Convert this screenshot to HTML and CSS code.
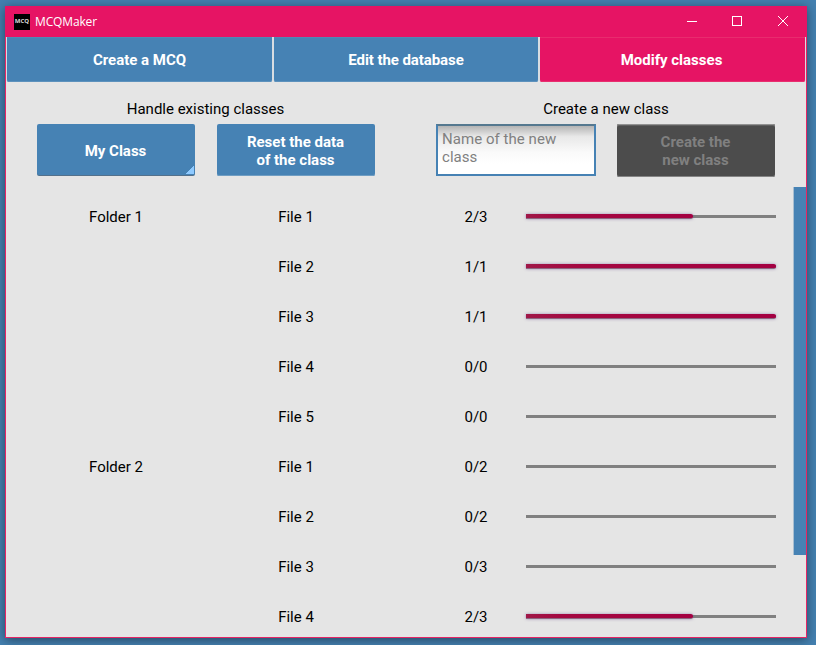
FILE: index.html
```html
<!DOCTYPE html>
<html lang="en">
<head>
<meta charset="utf-8">
<title>MCQMaker</title>
<link rel="stylesheet" href="styles.css">
</head>
<body>
<main class="window">
  <header class="titlebar">
    <span class="logo">MCQ</span>
    <span class="title">MCQMaker</span>
    <svg class="controls" width="104" height="12" viewBox="0 0 104 12" fill="none" stroke="#fff">
      <path d="M1 6.500h10"/>
      <rect x="46.500" y="1.500" width="9" height="9"/>
      <path d="M92 1l10 10M102 1L92 11"/>
    </svg>
  </header>
  <nav class="tabs">
    <button class="tab">Create a MCQ</button>
    <button class="tab edit">Edit the database</button>
    <button class="tab active">Modify classes</button>
  </nav>
  <section class="forms">
    <div class="group existing">
      <h2>Handle existing classes</h2>
      <div class="fields">
        <button class="btn select">My Class</button>
        <button class="btn">Reset the data<br>of the class</button>
      </div>
    </div>
    <div class="group">
      <h2>Create a new class</h2>
      <div class="fields">
        <div class="input">Name of the new class</div>
        <button class="btn disabled">Create the<br>new class</button>
      </div>
    </div>
  </section>
  <section class="scroll">
    <div class="rows">
      <div class="row"><span>Folder 1</span><span>File 1</span><span class="count">2/3</span><div class="bar"><div class="fill" style="width:66.667%"></div></div></div>
      <div class="row"><span></span><span>File 2</span><span class="count">1/1</span><div class="bar"><div class="fill" style="width:100%"></div></div></div>
      <div class="row"><span></span><span>File 3</span><span class="count">1/1</span><div class="bar"><div class="fill" style="width:100%"></div></div></div>
      <div class="row"><span></span><span>File 4</span><span class="count">0/0</span><div class="bar"></div></div>
      <div class="row"><span></span><span>File 5</span><span class="count">0/0</span><div class="bar"></div></div>
      <div class="row"><span>Folder 2</span><span>File 1</span><span class="count">0/2</span><div class="bar"></div></div>
      <div class="row"><span></span><span>File 2</span><span class="count">0/2</span><div class="bar"></div></div>
      <div class="row"><span></span><span>File 3</span><span class="count">0/3</span><div class="bar"></div></div>
      <div class="row"><span></span><span>File 4</span><span class="count">2/3</span><div class="bar"><div class="fill" style="width:66.667%"></div></div></div>
    </div>
    <div class="thumb"></div>
  </section>
</main>
</body>
</html>
```
FILE: styles.css
```css
* { box-sizing: border-box; }
body {
  margin: 0;
  padding: 6px 9px 7px 5px;
  height: 645px;
  overflow: hidden;
  background: #4480b0;
  font: 15px/18px Roboto, sans-serif;
  color: #000;
}
.window {
  height: 632px;
  width: 802px;
  border: 1px solid #e62565;
  border-top: 0;
  background: #e5e5e5;
  box-shadow: 0 2px 10px rgba(0, 0, 0, .45);
  display: flex;
  flex-direction: column;
}
.titlebar {
  height: 31px;
  flex: none;
  margin: 0 -1px;
  padding: 0 17px 0 9px;
  display: flex;
  align-items: center;
  background: #e61464;
  color: #fff;
}
.logo {
  width: 16px;
  height: 16px;
  background: #000;
  color: #ddd;
  font: bold 6px/15px "Open Sans", sans-serif;
  text-align: center;
}
.title {
  margin-left: 5px;
  font: 12px/16px "Open Sans", sans-serif;
  letter-spacing: -.15px;
}
.controls {
  margin: 0 0 2px auto;
}
.tabs {
  display: grid;
  grid-template-columns: 265px 264px 265px;
  height: 45px;
  flex: none;
  justify-content: space-between;
  padding: 0 1px;
  background: linear-gradient(#d8dde2 44px, #e5e5e5 44px);
}
button {
  border: 0;
  margin: 0;
  padding: 0;
  font: bold 15px/18px Roboto, sans-serif;
  color: #fff;
}
.tab {
  background: #4682b4;
  border-radius: 0 0 2px 2px;
  box-shadow: inset 0 -1px #5e92bd, inset 0 1px #5088b6;
}
.tab.edit { letter-spacing: -.08px; }
.tab.active {
  background: #e61464;
  box-shadow: inset 0 -1px #e8306f, inset 0 1px #e82c6e;
  padding-right: 2px;
}
.forms {
  display: flex;
  height: 105px;
  flex: none;
  padding: 18px 30px 0;
  justify-content: space-between;
}
.group { width: 340px; }
h2 {
  margin: 0 0 6px;
  font: 15px/18px Roboto, sans-serif;
  text-align: center;
}
.existing h2 { padding-right: 1px; }
.fields {
  display: flex;
  justify-content: space-between;
  padding: 0 1px 0 0;
}
.existing .fields { padding-left: 1px; }
.btn {
  width: 158px;
  height: 52px;
  padding: 2px 1px 0 0;
  background: #4682b4;
  border-radius: 2px;
  box-shadow: inset 0 -1px #6f9dc2;
}
.select {
  background: linear-gradient(135deg, transparent 50%, #8fcaff 50%) right 1px bottom 2px / 9px 8px no-repeat #4682b4;
  box-shadow: inset 0 -1px #54718b;
}
.disabled {
  height: 53px;
  padding: 1px 1px 0 0;
  background: #4c4c4c;
  color: #808080;
  box-shadow: inset 0 1px #929292, inset 0 2px #606060, inset 0 -1px #858585;
}
.input {
  width: 160px;
  height: 52px;
  border: 2px solid #4682b4;
  border-top-color: #55788f;
  background: linear-gradient(#b4b4b4, #e8e8e8 22%, #fafafa 55%, #fff 80%);
  color: #808080;
  padding: 4px;
  letter-spacing: .05px;
}
.scroll {
  flex: 1;
  min-height: 0;
  display: flex;
  justify-content: space-between;
}
.rows {
  padding: 5px 0 0 20px;
  width: 786px;
  overflow: hidden;
}
.row {
  height: 50px;
  width: 750px;
  display: grid;
  grid-template-columns: 180px 180px 140px 250px;
  align-items: center;
  text-align: center;
}
.count { padding-left: 40px; }
.bar {
  height: 3px;
  margin-top: -1px;
  background: #808080;
}
.fill {
  height: 5px;
  transform: translateY(-1px);
  background: linear-gradient(90deg, #a01848, #a40842 20%, #a40042);
  border-bottom: 1px solid #8d6680;
  border-radius: 0 2px 2px 0;
  box-shadow: 0 0 3px rgba(90, 50, 130, .5);
}
.thumb {
  width: 12px;
  height: 368px;
  background: #4682b4;
  box-shadow: -1px 0 #a8bed0;
}
```
